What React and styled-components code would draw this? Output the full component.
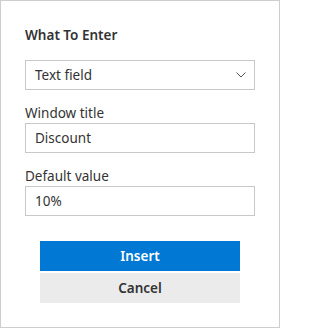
import React from 'react'
import styled, { createGlobalStyle } from 'styled-components'

const GlobalStyle = createGlobalStyle`
  html, body {
    margin: 0;
    padding: 0;
    background: #fff;
  }
  body {
    font-family: 'Noto Sans', 'Open Sans', sans-serif;
    color: #333;
  }
`

const Panel = styled.div`
  box-sizing: border-box;
  width: 280px;
  height: 328px;
  border: 1px solid #cdcdcd;
  padding: 24px 24px 0 24px;
  display: flex;
  flex-direction: column;
  background: #fff;
`

const Heading = styled.div`
  font-size: 13.5px;
  line-height: 20px;
  font-weight: 600;
  color: #333;
  margin-bottom: 15px;
`

const Field = styled.div`
  display: flex;
  flex-direction: column;
  margin-top: ${props => props.gap || 0}px;
`

const Label = styled.div`
  font-size: 13.5px;
  line-height: 20px;
  color: #333;
`

const Box = styled.div`
  box-sizing: border-box;
  height: 30px;
  width: 230px;
  border: 1px solid #c8c8c8;
  display: flex;
  align-items: center;
  justify-content: space-between;
  padding: 0 8px 0 9px;
  font-size: 13.5px;
  color: #333;
`

const Chevron = styled.svg`
  width: 10px;
  height: 6px;
  display: block;
`

const Buttons = styled.div`
  display: flex;
  flex-direction: column;
  align-items: center;
  gap: 2px;
  margin-top: 25px;
`

const Button = styled.div`
  width: 200px;
  height: 30px;
  display: flex;
  align-items: center;
  justify-content: center;
  font-size: 13.5px;
  font-weight: 600;
  background: ${props => (props.primary ? '#0078d4' : '#ebebeb')};
  color: ${props => (props.primary ? '#fff' : '#333')};
`

const App = () => {
  return (
    <React.Fragment>
      <GlobalStyle />
      <Panel>
        <Heading>What To Enter</Heading>
        <Box>
          <span>Text field</span>
          <Chevron viewBox="0 0 10 6">
            <polyline
              points="0.5,0.5 5,5 9.5,0.5"
              fill="none"
              stroke="#555"
              strokeWidth="1"
            />
          </Chevron>
        </Box>
        <Field gap={13}>
          <Label>Window title</Label>
          <Box>Discount</Box>
        </Field>
        <Field gap={13}>
          <Label>Default value</Label>
          <Box>10%</Box>
        </Field>
        <Buttons>
          <Button primary>Insert</Button>
          <Button>Cancel</Button>
        </Buttons>
      </Panel>
    </React.Fragment>
  )
}

export default App
